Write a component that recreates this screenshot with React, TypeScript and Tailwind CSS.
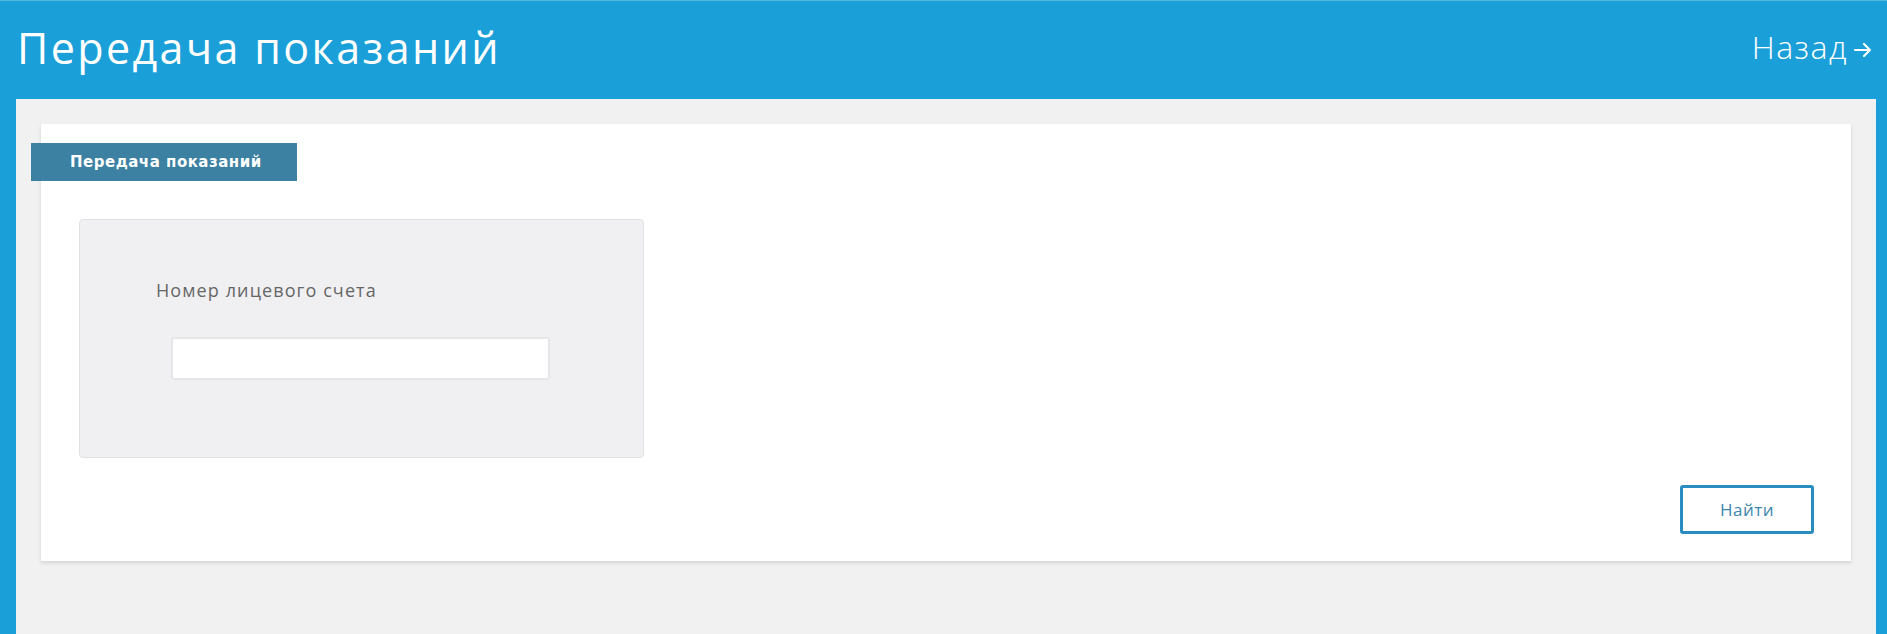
import React from "react";

export default function App() {
  return (
    <div className="w-[1887px] h-[634px] bg-[#1a9fd8] flex flex-col overflow-hidden border-t border-[#58b6e2]" style={{ fontFamily: '"Open Sans", "Liberation Sans", sans-serif' }}>
      <div className="h-[98px] shrink-0 flex items-start justify-between pl-[17px] pr-[14px] pt-[21px]">
        <h1 className="text-[43px] leading-[52px] font-normal text-white tracking-[2.4px]">Передача показаний</h1>
        <div className="flex items-center gap-[5px] mt-[5px] text-white text-[32px] leading-[40px] font-light tracking-[1.5px]">
          <span>Назад</span>
          <svg width="20" height="20" viewBox="0 0 20 20" fill="none" stroke="white" strokeWidth="2.2" strokeLinecap="round" strokeLinejoin="round" className="mt-[5px]">
            <path d="M2 10h15M11 4l6 6-6 6" />
          </svg>
        </div>
      </div>
      <div className="flex-1 ml-[16px] mr-[11px] bg-[#f1f1f1] pt-[25px] pl-[25px] pr-[25px]">
        <div className="relative bg-white h-[437px] shadow-[0_2px_4px_rgba(0,0,0,0.12)] pt-[19px]">
          <div className="relative -ml-[10px] w-[266px] h-[38px] bg-[#3c80a2] flex items-center pl-[39px]">
            <span className="text-white text-[15px] font-bold tracking-[0.5px]" style={{ fontFamily: '"DejaVu Sans", sans-serif' }}>Передача показаний</span>
          </div>
          <div className="ml-[38px] mt-[38px] w-[565px] h-[239px] bg-[#f0f0f2] border border-[#e2e2e4] rounded-[4px] pt-[57px] pl-[76px]">
            <div className="text-[18px] text-[#666666] leading-[26px] tracking-[1.1px]">Номер лицевого счета</div>
            <input type="text" className="mt-[34px] ml-[15px] w-[379px] h-[43px] bg-white border-2 border-[#e6e6e9] rounded-[3px] outline-none" />
          </div>
          <div className="flex justify-end pr-[37px] mt-[27px]">
            <button className="w-[134px] h-[49px] border-[3px] border-[#2a8dc0] rounded-[3px] text-[#3b87b0] text-[17px] font-medium tracking-[0.5px] bg-white">Найти</button>
          </div>
        </div>
      </div>
    </div>
  );
}
